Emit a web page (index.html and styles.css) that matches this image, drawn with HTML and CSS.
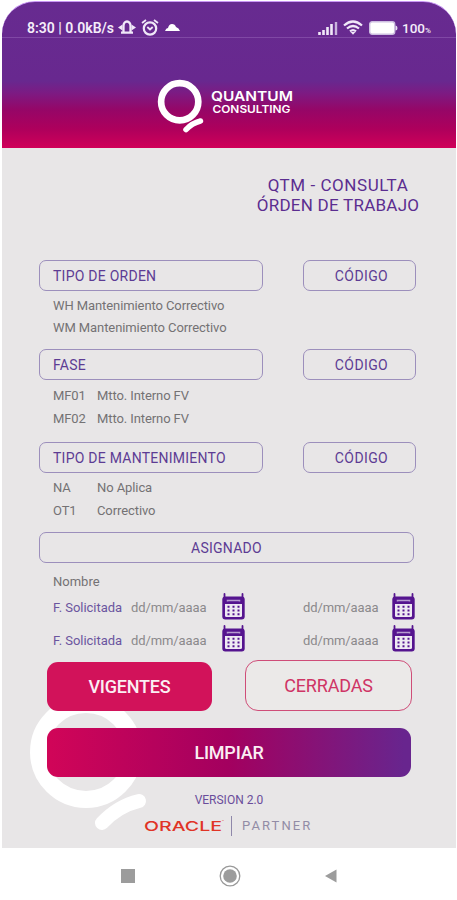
FILE: index.html
```html
<!DOCTYPE html>
<html lang="es">
  <head>
    <meta charset="UTF-8" />
    <meta name="viewport" content="width=device-width, initial-scale=1.0" />
    <title>QTM - Consulta Orden de Trabajo</title>
    <link rel="stylesheet" href="styles.css">
  </head>
  <body>
    <svg width="0" height="0" class="defs">
      <symbol id="q" viewBox="0 0 120 140">
        <circle cx="58" cy="58" r="47.5" fill="none" stroke="#fff" stroke-width="17" />
        <path d="M74 129 Q90 112 111 107" fill="none" stroke="#fff" stroke-width="14" stroke-linecap="round" />
      </symbol>
      <symbol id="calendar" viewBox="0 0 23 27">
        <path d="M2.5 1v6M20.5 1v6" stroke="#55148f" stroke-width="1.8" stroke-linecap="round" />
        <rect x="0.3" y="3.5" width="22.4" height="23" rx="3" fill="#55148f" />
        <path d="M5.5 8.6v-1.2h12v1.2" fill="none" stroke="#b79bd0" stroke-width="1.5" />
        <path d="M3 11h17v11.5q0 1.5-1.5 1.5h-14q-1.5 0-1.5-1.5z" fill="#eee9f2" />
        <g fill="#55148f">
          <path d="M5.5 12.7h2v2h-2zM10.5 12.7h2v2h-2zM15.5 12.7h2v2h-2z" />
          <path d="M5.5 16.5h2v2h-2zM10.5 16.5h2v2h-2zM15.5 16.5h2v2h-2z" />
          <path d="M5.5 20.3h2v2h-2zM10.5 20.3h2v2h-2zM15.5 20.3h2v2h-2z" />
        </g>
      </symbol>
    </svg>

    <div class="phone">
      <header class="header">
        <div class="status">
          <span class="time">8:30 | 0.0kB/s</span>
          <svg class="bell" width="18" height="15" viewBox="0 0 18 15">
            <path d="M5.5 12V6a3.5 4.5 0 0 1 7 0v6M3 12.6h12" fill="none" stroke="#f0e8f8" stroke-width="2.3" />
            <path d="M0 7.5l4.5-3v6zM18 7.5l-4.5-3v6z" fill="#f0e8f8" />
          </svg>
          <svg class="alarm" width="18" height="17" viewBox="0 0 18 17">
            <circle cx="9" cy="9.5" r="6.2" fill="none" stroke="#f0e8f8" stroke-width="2.2" />
            <path d="M1 4l4-3M17 4l-4-3M6.3 8l2.7 2.5 2.7-2.5" fill="none" stroke="#f0e8f8" stroke-width="1.8" />
          </svg>
          <svg class="cloud" width="15" height="9" viewBox="0 0 15 9">
            <path d="M0 8q1-3 3-3 1-4 4-4 3 0 4 3 3 1 4 4z" fill="#fff" />
          </svg>
          <svg class="signal" width="20" height="14" viewBox="0 0 20 14">
            <path d="M1.5 11v3M5.5 9v5M9.5 6v8M13.5 3v11" stroke="#f0e8f8" stroke-width="2.6" />
            <path d="M18 1v13" stroke="#c9b3dd" stroke-width="2.4" />
          </svg>
          <svg class="wifi" width="20" height="15" viewBox="0 0 20 15">
            <path d="M1 5.5q9-8 18 0M4 8.5q6-5 12 0M7 11.3q3-2.500 6 0" fill="none" stroke="#f0e8f8" stroke-width="2.2" />
            <path d="M7.500 12h5L10 14.8z" fill="#f0e8f8" />
          </svg>
          <svg class="battery" width="29" height="14" viewBox="0 0 29 14">
            <rect x="0.7" y="0.7" width="25" height="12.6" rx="2.5" fill="#fff" stroke="#cdbfe0" stroke-width="1.4" />
            <path d="M26.500 4.5q2 0 2 2.5t-2 2.5z" fill="#e6dcf0" />
          </svg>
          <span class="percent">100<small>%</small></span>
        </div>
        <div class="brand">
          <svg class="brand-q" width="47" height="55"><use href="#q" /></svg>
          <svg class="brand-name" width="84" height="30">
            <text x="0" y="11.5" font-size="13" textLength="82" lengthAdjust="spacingAndGlyphs">QUANTUM</text>
            <text x="1.5" y="23.500" font-size="10.5" textLength="78" lengthAdjust="spacingAndGlyphs">CONSULTING</text>
          </svg>
        </div>
      </header>

      <main class="main">
        <h1 class="title">QTM - CONSULTA<br><span>ÓRDEN DE TRABAJO</span></h1>

        <section class="group">
          <div class="fields">
            <div class="field">TIPO DE ORDEN</div>
            <div class="field code">CÓDIGO</div>
          </div>
          <p class="item wide">WH Mantenimiento Correctivo</p>
          <p class="item wide">WM Mantenimiento Correctivo</p>
        </section>

        <section class="group second">
          <div class="fields">
            <div class="field">FASE</div>
            <div class="field code">CÓDIGO</div>
          </div>
          <p class="item"><span class="key">MF01</span>Mtto. Interno FV</p>
          <p class="item"><span class="key">MF02</span>Mtto. Interno FV</p>
        </section>

        <section class="group third">
          <div class="fields">
            <div class="field">TIPO DE MANTENIMIENTO</div>
            <div class="field code">CÓDIGO</div>
          </div>
          <p class="item"><span class="key">NA</span>No Aplica</p>
          <p class="item"><span class="key">OT1</span>Correctivo</p>
        </section>

        <div class="field assigned">ASIGNADO</div>
        <p class="name">Nombre</p>
        <div class="dates">
          <span class="label">F. Solicitada</span>
          <span class="date">dd/mm/aaaa</span>
          <svg class="cal" width="23" height="27"><use href="#calendar" /></svg>
          <span class="date end">dd/mm/aaaa</span>
          <svg class="cal" width="23" height="27"><use href="#calendar" /></svg>
        </div>
        <div class="dates until">
          <span class="label">F. Solicitada</span>
          <span class="date">dd/mm/aaaa</span>
          <svg class="cal" width="23" height="27"><use href="#calendar" /></svg>
          <span class="date end">dd/mm/aaaa</span>
          <svg class="cal" width="23" height="27"><use href="#calendar" /></svg>
        </div>

        <div class="actions">
          <svg class="watermark" width="120" height="140"><use href="#q" /></svg>
          <button class="btn current">VIGENTES</button>
          <button class="btn closed">CERRADAS</button>
          <button class="btn clear">LIMPIAR</button>
        </div>

        <p class="version">VERSION 2.0</p>
        <div class="partner">
          <svg class="oracle" width="82" height="18">
            <text x="0" y="14" font-size="13.5" textLength="78" lengthAdjust="spacingAndGlyphs">ORACLE</text>
            <text x="78" y="6" font-size="3">™</text>
          </svg>
          <span class="partner-name">PARTNER</span>
        </div>
      </main>

      <nav class="nav">
        <svg width="14" height="14"><rect width="14" height="14" fill="#9c9c9c" /></svg>
        <svg width="22" height="22" viewBox="0 0 22 22">
          <circle cx="11" cy="11" r="9.8" fill="none" stroke="#999" stroke-width="1.3" />
          <circle cx="11" cy="11" r="6.8" fill="#9c9c9c" />
        </svg>
        <svg width="12" height="14"><path d="M0 7L11.5 0.5v13z" fill="#9c9c9c" /></svg>
      </nav>
    </div>
  </body>
</html>
```

FILE: styles.css
```css
* {
  margin: 0;
  padding: 0;
  box-sizing: border-box;
}
body {
  background: #fff;
  font-family: Roboto, sans-serif;
}
svg {
  display: block;
  flex: none;
}
.defs {
  position: absolute;
}
.phone {
  width: 454px;
  height: 900px;
  margin-left: 2px;
  padding-top: 1px;
}
.header {
  height: 147px;
  border-top: 1px solid #c997f5;
  border-radius: 33px 33px 0 0;
  background: linear-gradient(#672b90 0, #68288f 79px, #7c1b83 91px, #960667 108px, #ae005c 127px, #d00059 146px);
}
.status {
  display: flex;
  align-items: center;
  height: 36px;
  padding: 16px 24px 0 25px;
  border-bottom: 1px solid #8048a5;
  color: #f4edf9;
}
.time {
  width: 91px;
  font-size: 14px;
  font-weight: 600;
  white-space: nowrap;
}
.alarm {
  margin-left: 5px;
}
.cloud {
  margin-left: 6px;
}
.signal {
  margin-left: auto;
}
.wifi {
  margin-left: 5px;
}
.battery {
  margin-left: 6px;
}
.percent {
  margin-left: 4px;
  width: 30px;
  font-size: 13.5px;
  font-weight: 500;
  white-space: nowrap;
}
.percent small {
  font-size: 8px;
}
.brand {
  display: flex;
  padding: 41px 0 0 155px;
}
.brand-name {
  margin: 10px 0 0 7px;
  fill: #fff;
  font-family: Inter, sans-serif;
  font-weight: 600;
}
.main {
  height: 700px;
  padding: 27px 0 0 37px;
  background: #e8e6e7;
  color: #747274;
}
.title {
  width: 182px;
  margin-left: 208px;
  color: #5b2d90;
  font-size: 17px;
  font-weight: 400;
  line-height: 20px;
  letter-spacing: 0.55px;
  text-align: center;
  white-space: nowrap;
}
.title span {
  letter-spacing: 0.25px;
}
.group {
  height: 89px;
  margin-top: 45px;
}
.fields {
  display: flex;
  gap: 40px;
  margin-bottom: 4px;
}
.field {
  width: 224px;
  height: 31px;
  padding-left: 13px;
  border: 1px solid #9c8fbc;
  border-radius: 7px;
  color: #5d3c94;
  font-size: 14px;
  line-height: 30px;
  letter-spacing: 0.25px;
}
.code {
  width: 113px;
  padding-left: 4px;
  letter-spacing: 0.4px;
  text-align: center;
}
.item {
  display: flex;
  padding-left: 14px;
  font-size: 13px;
  line-height: 23px;
  letter-spacing: -0.09px;
}
.wide {
  line-height: 22px;
}
.key {
  width: 44px;
}
.second {
  height: 93px;
  margin-top: 0;
}
.third {
  height: 90px;
  margin-top: 0;
}
.third .fields {
  margin-bottom: 3px;
}
.assigned {
  width: 375px;
  padding-left: 0;
  text-align: center;
}
.name {
  height: 28px;
  padding-left: 14px;
  font-size: 13px;
  line-height: 37px;
}
.dates {
  display: flex;
  align-items: center;
  width: 376px;
  height: 33px;
  padding-left: 14px;
  font-size: 13px;
}
.cal {
  margin-bottom: 2px;
}
.until .cal {
  margin-bottom: 4px;
}
.label {
  width: 78px;
  color: #6b559f;
  letter-spacing: -0.03px;
}
.date {
  width: 91px;
  color: #8b898c;
  letter-spacing: -0.1px;
}
.end {
  width: 89px;
  margin-left: auto;
}
.actions {
  position: relative;
  display: flex;
  flex-wrap: wrap;
  align-items: flex-end;
  gap: 17px 33px;
  width: 373px;
  margin-top: 3px;
  padding-left: 8px;
}
.watermark {
  position: absolute;
  top: 34px;
  left: -11px;
}
.btn {
  position: relative;
  height: 49px;
  border: 0;
  border-radius: 11px;
  color: #fbeef3;
  font-family: Roboto, sans-serif;
  font-size: 18px;
  letter-spacing: -0.2px;
}
.current {
  width: 165px;
  background: #d2125a;
  font-weight: 500;
}
.closed {
  width: 167px;
  height: 51px;
  border: 1px solid #cf4d78;
  border-radius: 13px;
  background: #ebe9e8;
  color: #cf3465;
}
.clear {
  width: 364px;
  background: linear-gradient(90deg, #d10558, #a3005f 50%, #68258e 98%);
  font-weight: 500;
}
.version {
  width: 380px;
  margin-top: 14px;
  color: #6a4d9b;
  font-size: 12px;
  line-height: 18px;
  text-align: center;
}
.partner {
  display: flex;
  align-items: center;
  height: 20px;
  margin: 7px 0 0 105px;
}
.oracle {
  fill: #e03426;
  font-family: Inter, sans-serif;
  font-weight: 500;
}
.partner-name {
  margin-left: 5px;
  padding-left: 10px;
  border-left: 1px solid #8f88aa;
  color: #928ca6;
  font-size: 13px;
  line-height: 20px;
  letter-spacing: 2.1px;
}
.nav {
  display: flex;
  align-items: center;
  gap: 84px;
  height: 51px;
  padding: 4px 0 0 119px;
}
```
